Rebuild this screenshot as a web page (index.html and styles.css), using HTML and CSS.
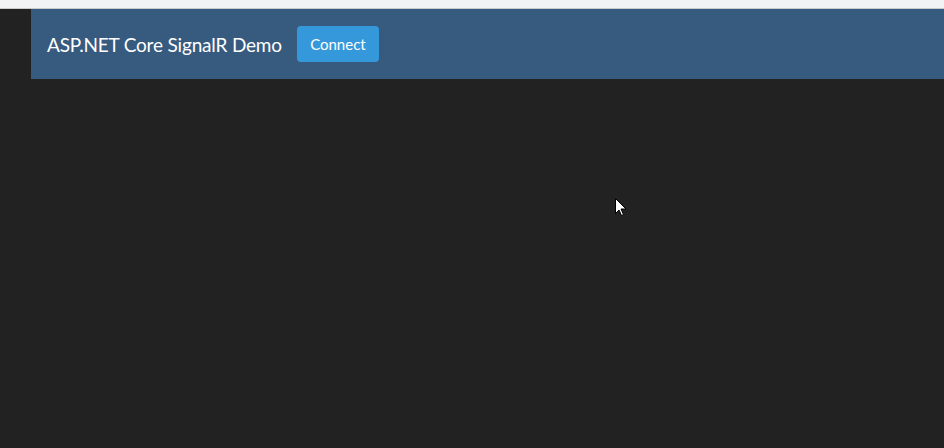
FILE: index.html
```html
<!DOCTYPE html>
<html>
<head>
<meta charset="utf-8">
<link rel="stylesheet" href="styles.css">
</head>
<body>
<div class="chrome"></div>
<div class="page">
  <div class="gutter"></div>
  <nav class="navbar">
    <span class="brand">ASP.NET Core SignalR Demo</span>
    <button class="btn">Connect</button>
  </nav>
</div>
<svg class="cursor" width="12" height="19" viewBox="0 0 12 19">
  <path d="M0.5 0.5 L0.5 15.5 L4 12 L6.5 17.5 L8.5 16.5 L6 11 L11 11 Z" fill="#fff" stroke="#000" stroke-width="1"/>
</svg>
</body>
</html>
```
FILE: styles.css
```css
html, body {
  margin: 0;
  padding: 0;
  background: #222222;
  height: 100%;
  overflow: hidden;
}
body {
  font-family: Lato, "Open Sans", sans-serif;
  position: relative;
}
.chrome {
  height: 8px;
  background: #f1f3f4;
  border-bottom: 1px solid #c8cacc;
}
.page {
  display: flex;
}
.gutter {
  width: 31px;
  flex: none;
}
.navbar {
  flex: 1;
  height: 70px;
  background: #375a7f;
  display: flex;
  align-items: center;
  padding-left: 16px;
  box-sizing: border-box;
  gap: 15px;
}
.brand {
  color: #ffffff;
  font-size: 19px;
  letter-spacing: -0.18px;
  margin-top: 1px;
}
.btn {
  font-family: Lato, "Open Sans", sans-serif;
  background: #3498db;
  color: #fff;
  border: none;
  border-radius: 4px;
  font-size: 15px;
  height: 36px;
  width: 82px;
  padding: 0;
  margin-bottom: 1px;
}
.cursor {
  position: absolute;
  left: 615px;
  top: 198px;
}
```
